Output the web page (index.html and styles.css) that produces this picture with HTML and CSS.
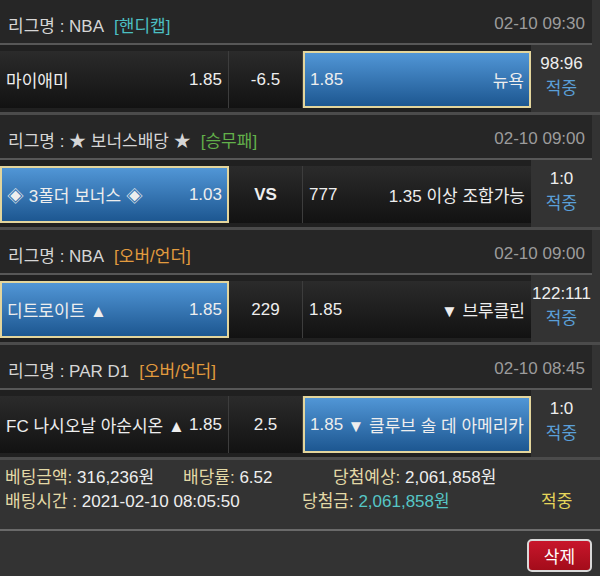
FILE: index.html
```html
<!DOCTYPE html>
<html lang="ko">

<head>
    <meta charset="UTF-8">
    <meta name="viewport" content="width=device-width, initial-scale=1.0">
    <title>배팅내역</title>
    <link rel="stylesheet" href="styles.css">
</head>

<body>

    <div class="slip">

        <!-- 경기 1 -->
        <div class="game">
            <div class="game-head">
                <span class="league">리그명 : NBA<span class="type handi">[핸디캡]</span></span>
                <span class="time">02-10 09:30</span>
            </div>
            <div class="odds">
                <div class="pick home"><span>마이애미</span><span>1.85</span></div>
                <div class="mid">-6.5</div>
                <div class="pick away on"><span>1.85</span><span>뉴욕</span></div>
                <div class="result"><span class="score">98:96</span><span class="hit">적중</span></div>
            </div>
        </div>

        <!-- 경기 2 -->
        <div class="game">
            <div class="game-head">
                <span class="league">리그명 : ★ 보너스배당 ★<span class="type wdl">[승무패]</span></span>
                <span class="time">02-10 09:00</span>
            </div>
            <div class="odds">
                <div class="pick home on"><span>◈ 3폴더 보너스 ◈</span><span>1.03</span></div>
                <div class="mid vs">VS</div>
                <div class="pick away"><span>777</span><span>1.35 이상 조합가능</span></div>
                <div class="result"><span class="score">1:0</span><span class="hit">적중</span></div>
            </div>
        </div>

        <!-- 경기 3 -->
        <div class="game">
            <div class="game-head">
                <span class="league">리그명 : NBA<span class="type ou">[오버/언더]</span></span>
                <span class="time">02-10 09:00</span>
            </div>
            <div class="odds">
                <div class="pick home on"><span>디트로이트 ▲</span><span>1.85</span></div>
                <div class="mid">229</div>
                <div class="pick away"><span>1.85</span><span>▼ 브루클린</span></div>
                <div class="result"><span class="score">122:111</span><span class="hit">적중</span></div>
            </div>
        </div>

        <!-- 경기 4 -->
        <div class="game">
            <div class="game-head">
                <span class="league">리그명 : PAR D1<span class="type ou">[오버/언더]</span></span>
                <span class="time">02-10 08:45</span>
            </div>
            <div class="odds">
                <div class="pick home"><span>FC 나시오날 아순시온 ▲</span><span>1.85</span></div>
                <div class="mid">2.5</div>
                <div class="pick away on"><span>1.85</span><span>▼ 클루브 솔 데 아메리카</span></div>
                <div class="result"><span class="score">1:0</span><span class="hit">적중</span></div>
            </div>
        </div>

        <div class="summary">
            <div class="sum-row first">
                <span><b>베팅금액:</b> 316,236원</span>
                <span><b>배당률:</b> 6.52</span>
                <span><b>당첨예상:</b> 2,061,858원</span>
            </div>
            <div class="sum-row second">
                <span><b>배팅시간 :</b> 2021-02-10 08:05:50</span>
                <span><b>당첨금:</b> <i class="win">2,061,858원</i></span>
                <span class="status">적중</span>
            </div>
        </div>

        <div class="actions">
            <button class="btn-del">삭제</button>
        </div>

    </div>

</body>

</html>
```

FILE: styles.css
```css
* {
    margin: 0;
    padding: 0;
    box-sizing: border-box;
}

body {
    background: #333;
    color: #eee;
    font-family: 'Liberation Sans', 'Noto Sans CJK KR', sans-serif;
    font-size: 17px;
}

.game {
    border-bottom: 3px solid #4b4b4b;
}

.game-head {
    display: flex;
    justify-content: space-between;
    align-items: center;
    height: 45px;
    margin-right: 8px;
    padding: 5px 7px 0 8px;
    background: #262626;
    border-bottom: 2px solid #575757;
}

.league {
    color: #d6d6d6;
}

.type {
    margin-left: 10px;
}

.handi {
    color: #4cbfc2;
}

.wdl {
    color: #62b04a;
}

.ou {
    color: #e29b3e;
}

.time {
    color: #9c9c9c;
}

.odds {
    display: grid;
    grid-template-columns: 229px 74px 228px 61px;
    height: 67px;
    margin-right: 8px;
    background: #202020;
}

.pick,
.mid {
    height: 57px;
    margin-top: 6px;
    background: linear-gradient(#2b2b2b, #121212);
}

.pick {
    display: flex;
    justify-content: space-between;
    align-items: center;
    padding: 0 6px;
    white-space: nowrap;
}

.home,
.mid {
    border-right: 1px solid #3d3d3d;
}

.pick.on {
    padding: 0 5px;
    background: linear-gradient(#5196d6, #1d5791);
    border: 2px solid #e3d59c;
}

.mid {
    display: flex;
    justify-content: center;
    align-items: center;
}

.vs {
    font-weight: bold;
}

.result {
    display: flex;
    flex-direction: column;
    align-items: center;
    padding-top: 6px;
    line-height: 25px;
    background: #333;
}

.hit {
    color: #5a9fd8;
}

.summary {
    padding: 6px 0 15px 5px;
    border-bottom: 2px solid #6a6a6a;
    line-height: 24px;
}

.sum-row {
    display: grid;
}

.sum-row.first {
    grid-template-columns: 178px 150px auto;
}

.sum-row.second {
    grid-template-columns: 297px 239px auto;
}

.sum-row b {
    font-weight: normal;
    color: #e3d9a6;
}

.sum-row i {
    font-style: normal;
}

.win {
    color: #56c6c6;
}

.status {
    color: #e6d65a;
}

.actions {
    display: flex;
    justify-content: flex-end;
    padding: 8px 8px 0 0;
}

.btn-del {
    width: 65px;
    height: 33px;
    background: linear-gradient(#c8162b, #a30c1a);
    border: 2px solid #d9d9d9;
    border-radius: 5px;
    color: #fff;
    font-family: 'Liberation Sans', 'Noto Sans CJK KR', sans-serif;
    font-size: 17px;
    cursor: pointer;
}
```
